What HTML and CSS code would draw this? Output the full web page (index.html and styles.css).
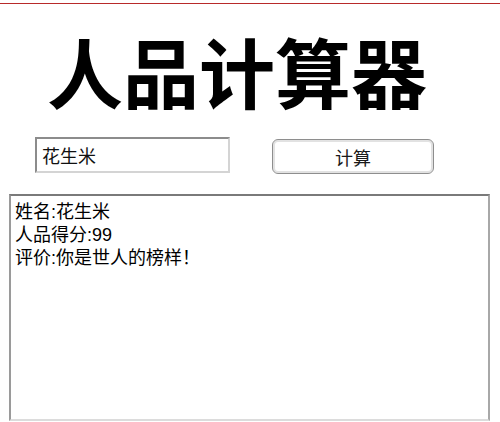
FILE: index.html
```html
<!DOCTYPE html>
<html lang="zh-CN">
<head>
    <meta charset="UTF-8">
    <meta name="viewport" content="width=device-width, initial-scale=1.0">
    <title>人品计算器</title>
    <link rel="stylesheet" href="styles.css">
</head>
<body>
    <div class="top-line"></div>
    <h1 class="title">人品计算器</h1>
    <div class="form-row">
        <input class="name-input" type="text" value="花生米">
        <button class="calc-btn" type="button">计算</button>
    </div>
    <div class="result">
        <p>姓名:花生米</p>
        <p>人品得分:99</p>
        <p>评价:你是世人的榜样！</p>
    </div>
</body>
</html>
```

FILE: styles.css
```css
/* base */
* {
    margin: 0;
    padding: 0;
    box-sizing: border-box;
}

body {
    background: #fff;
    color: #000;
    font-family: "Liberation Sans", "Noto Sans CJK SC", sans-serif;
    font-size: 18px;
}

/* red rule at the very top */
.top-line {
    margin-top: 3px;
    height: 1px;
    background-color: #b82a2a;
}

/* big heading */
.title {
    margin-top: 28px;
    padding-left: 47px;
    font-family: "Noto Sans CJK SC", sans-serif;
    font-size: 76px;
    font-weight: 700;
    line-height: 76px;
}

/* input + button */
.form-row {
    display: flex;
    align-items: flex-start;
    gap: 42px;
    margin-top: 29px;
    padding-left: 35px;
}

.name-input {
    width: 195px;
    height: 36px;
    padding: 0 5px;
    border: 2px solid;
    border-color: #8c8c8c #d4d4d4 #d4d4d4 #8c8c8c;
    font-family: "Noto Sans CJK SC", sans-serif;
    font-size: 18px;
    color: #111;
    outline: none;
}

.calc-btn {
    width: 162px;
    height: 35px;
    margin-top: 2px;
    border: 1px solid #8e8e8e;
    border-radius: 6px;
    background-color: #fff;
    box-shadow: inset 0 0 0 2px #e2e2e2;
    font-family: "Noto Sans CJK SC", sans-serif;
    font-size: 18px;
    color: #1a1a1a;
}

/* output box */
.result {
    width: 481px;
    height: 227px;
    margin: 20px 0 0 9px;
    padding: 5px 4px;
    border: 2px solid;
    border-color: #7a7a7a #a8a8a8 #dcdcdc #9a9a9a;
    line-height: 23px;
}
```
